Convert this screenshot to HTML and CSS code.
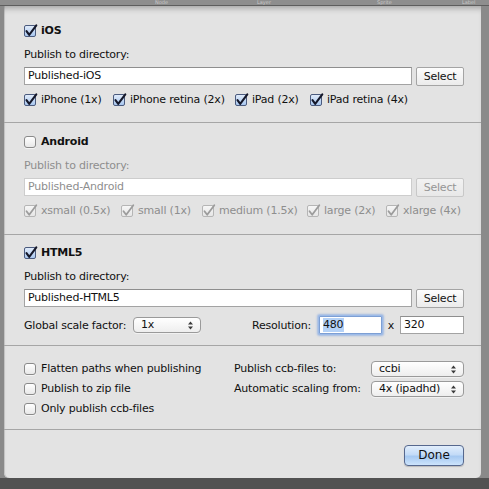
FILE: index.html
```html
<!DOCTYPE html>
<html>
<head>
<meta charset="utf-8">
<title>Publish Settings</title>
<link rel="stylesheet" href="styles.css">
</head>
<body>
<div class="titlebar"><span></span><span>Node</span><span>Layer</span><span>Sprite</span><span>Label</span></div>
<div class="stage">
  <div class="dialog">
    <section class="sec sec-ios">
      <div class="check"><span class="box on"><svg viewBox="0 0 14 14"><path d="M2.5 6.2 L5.2 9.8 L12.3 0.3"/></svg></span><b>iOS</b></div>
      <div class="lbl">Publish to directory:</div>
      <div class="dir-row"><div class="field">Published-iOS</div><div class="btn">Select</div></div>
      <div class="opts opts-ios">
        <div class="check"><span class="box on"><svg viewBox="0 0 14 14"><path d="M2.5 6.2 L5.2 9.8 L12.3 0.3"/></svg></span>iPhone (1x)</div>
        <div class="check"><span class="box on"><svg viewBox="0 0 14 14"><path d="M2.5 6.2 L5.2 9.8 L12.3 0.3"/></svg></span>iPhone retina (2x)</div>
        <div class="check"><span class="box on"><svg viewBox="0 0 14 14"><path d="M2.5 6.2 L5.2 9.8 L12.3 0.3"/></svg></span>iPad (2x)</div>
        <div class="check"><span class="box on"><svg viewBox="0 0 14 14"><path d="M2.5 6.2 L5.2 9.8 L12.3 0.3"/></svg></span>iPad retina (4x)</div>
      </div>
    </section>

    <section class="sec sec-android">
      <div class="check"><span class="box off"></span><b>Android</b></div>
      <div class="lbl dim">Publish to directory:</div>
      <div class="dir-row"><div class="field dis">Published-Android</div><div class="btn dis">Select</div></div>
      <div class="opts opts-and dim">
        <div class="check"><span class="box dis"><svg viewBox="0 0 14 14"><path d="M2.5 6.2 L5.2 9.8 L12.3 0.3"/></svg></span>xsmall (0.5x)</div>
        <div class="check"><span class="box dis"><svg viewBox="0 0 14 14"><path d="M2.5 6.2 L5.2 9.8 L12.3 0.3"/></svg></span>small (1x)</div>
        <div class="check"><span class="box dis"><svg viewBox="0 0 14 14"><path d="M2.5 6.2 L5.2 9.8 L12.3 0.3"/></svg></span>medium (1.5x)</div>
        <div class="check"><span class="box dis"><svg viewBox="0 0 14 14"><path d="M2.5 6.2 L5.2 9.8 L12.3 0.3"/></svg></span>large (2x)</div>
        <div class="check"><span class="box dis"><svg viewBox="0 0 14 14"><path d="M2.5 6.2 L5.2 9.8 L12.3 0.3"/></svg></span>xlarge (4x)</div>
      </div>
    </section>

    <section class="sec sec-html">
      <div class="check"><span class="box on"><svg viewBox="0 0 14 14"><path d="M2.5 6.2 L5.2 9.8 L12.3 0.3"/></svg></span><b>HTML5</b></div>
      <div class="lbl">Publish to directory:</div>
      <div class="dir-row"><div class="field">Published-HTML5</div><div class="btn">Select</div></div>
      <div class="scale">
        <span class="scale-lbl">Global scale factor:</span>
        <div class="popup w68"><span>1x</span><svg class="arr" viewBox="0 0 5 9"><path d="M0 3.6 L2.5 0.6 L5 3.6Z M0 5.4 L2.5 8.4 L5 5.4Z"/></svg></div>
        <span class="res-lbl">Resolution:</span>
        <div class="num focus"><span class="sel">480</span></div>
        <span class="times">x</span>
        <div class="num">320</div>
      </div>
    </section>

    <section class="sec sec-flags">
      <div class="flags">
        <div class="check"><span class="box off"></span>Flatten paths when publishing</div>
        <span class="flag-lbl">Publish ccb-files to:</span>
        <div class="popup"><span>ccbi</span><svg class="arr" viewBox="0 0 5 9"><path d="M0 3.6 L2.5 0.6 L5 3.6Z M0 5.4 L2.5 8.4 L5 5.4Z"/></svg></div>
        <div class="check"><span class="box off"></span>Publish to zip file</div>
        <span class="flag-lbl">Automatic scaling from:</span>
        <div class="popup"><span>4x (ipadhd)</span><svg class="arr" viewBox="0 0 5 9"><path d="M0 3.6 L2.5 0.6 L5 3.6Z M0 5.4 L2.5 8.4 L5 5.4Z"/></svg></div>
        <div class="check"><span class="box off"></span>Only publish ccb-files</div>
      </div>
    </section>

    <section class="sec sec-actions">
      <div class="done">Done</div>
    </section>
  </div>
</div>
</body>
</html>
```

FILE: styles.css
```css
* { box-sizing: border-box; }
html, body { margin: 0; padding: 0; }
body {
  width: 489px;
  height: 489px;
  overflow: hidden;
  background: #525252;
  font-family: "DejaVu Sans", "Lucida Grande", sans-serif;
  font-size: 11px;
  letter-spacing: -0.2px;
  color: #111;
}

.titlebar {
  height: 6px;
  background: #8e8e8e;
  border-bottom: 1px solid #5e5e5e;
  overflow: hidden;
  display: grid;
  grid-template-columns: 155px 102px 120px 85px auto;
  color: #c9c9c9;
  font-size: 5px;
  letter-spacing: 0;
  line-height: 5px;
}

.stage {
  height: 472px;
  background: #8a8a8a;
  padding-left: 4px;
}
.dialog {
  width: 477px;
  height: 472px;
  background: #e3e3e3;
  border-radius: 0 0 5px 5px;
  box-shadow: inset 0 6px 6px -4px rgba(0, 0, 0, 0.3), inset 1px 0 0 #c8c8c8;
}

.sec {
  padding: 0 17px 0 20px;
  border-bottom: 1px solid #a6a6a6;
}
.sec-ios { padding-top: 17px; padding-bottom: 14px; }
.sec-android { padding-top: 11px; padding-bottom: 15px; }
.sec-html { padding-top: 10px; padding-bottom: 11px; }
.sec-flags { padding-top: 15px; padding-bottom: 12px; }
.sec-actions {
  border-bottom: none;
  padding-top: 15px;
  display: flex;
  justify-content: flex-end;
}

.check {
  display: flex;
  align-items: center;
  height: 16px;
  line-height: 16px;
  white-space: nowrap;
}
.check b { font-weight: bold; }

.box {
  position: relative;
  flex: none;
  width: 12px;
  height: 12px;
  margin-right: 5px;
}
.box svg {
  position: absolute;
  left: -1px;
  top: -1px;
  width: 14px;
  height: 14px;
  overflow: visible;
}
.box svg path {
  fill: none;
  stroke: #15182a;
  stroke-width: 2.1;
  stroke-linecap: round;
  stroke-linejoin: round;
}
.box.on {
  border: 1px solid #4b5b7e;
  border-radius: 2px;
  background: linear-gradient(#e0ebfa, #a9c7ef);
}
.box.off {
  border: 1px solid #8a8a8a;
  border-radius: 3px;
  background: linear-gradient(#ffffff, #e8e8e8);
  box-shadow: 0 1px 0 rgba(255, 255, 255, 0.6);
}
.box.dis {
  border: 1px solid #b5b5b5;
  border-radius: 2px;
  background: linear-gradient(#f6f6f6, #e6e6e6);
}
.box.dis svg path { stroke: #9c9c9c; stroke-width: 1.8; }

.lbl {
  margin-top: 8px;
  height: 16px;
  line-height: 16px;
}
.dim { color: #8e8e8e; }

.dir-row {
  display: flex;
  margin-top: 4px;
  height: 18px;
}
.field {
  flex: 1;
  height: 18px;
  border: 1px solid #a3a3a3;
  border-top-color: #8e8e8e;
  background: #fff;
  padding: 0 3px;
  line-height: 16px;
}
.field.dis {
  border-color: #cdcdcd;
  color: #8e8e8e;
}
.btn {
  flex: none;
  width: 48px;
  height: 19px;
  margin-left: 4px;
  border: 1px solid #a4a4a4;
  border-radius: 2px;
  background: linear-gradient(#fdfdfd, #ebebeb);
  text-align: center;
  line-height: 17px;
}
.btn.dis {
  border-color: #c8c8c8;
  color: #969696;
  background: linear-gradient(#f2f2f2, #e8e8e8);
}

.opts {
  display: grid;
  margin-top: 7px;
}
.opts-ios { grid-template-columns: 89px 122px 75px auto; }
.opts-and { grid-template-columns: 97px 81px 105px 79px auto; }

.scale {
  display: flex;
  align-items: center;
  height: 18px;
  margin-top: 9px;
  white-space: nowrap;
}
.scale-lbl { width: 109px; flex: none; }
.res-lbl { margin-left: auto; margin-right: 8px; }

.popup {
  height: 16px;
  border: 1px solid #9a9a9a;
  border-radius: 4px;
  background: linear-gradient(#ffffff, #eeeeee);
  padding: 0 7px;
  display: flex;
  align-items: center;
  justify-content: space-between;
  line-height: 14px;
  box-shadow: 0 1px 0 rgba(255, 255, 255, 0.5);
}
.popup.w68 { width: 68px; flex: none; }
.arr {
  width: 5px;
  height: 9px;
  fill: #3b3b3b;
}

.num {
  flex: none;
  width: 64px;
  height: 18px;
  border: 1px solid #a3a3a3;
  border-top-color: #8e8e8e;
  background: #fff;
  padding: 0 3px;
  line-height: 16px;
}
.num.focus {
  width: 63px;
  border-color: #7d9fd4;
  box-shadow: 0 0 0 1px #9dbbe8, 0 0 2px 2px rgba(110, 155, 225, 0.55);
  border-radius: 1px;
}
.sel {
  display: inline-block;
  background: #b5d2f7;
  line-height: 14px;
  padding-right: 1px;
}
.times {
  width: 18px;
  text-align: center;
  flex: none;
}

.flags {
  display: grid;
  grid-template-columns: 210px 137px 1fr;
  grid-template-rows: repeat(3, 16px);
  row-gap: 4px;
  align-items: center;
}
.flag-lbl {
  line-height: 16px;
  white-space: nowrap;
}

.done {
  width: 60px;
  height: 21px;
  border: 1px solid #56688e;
  border-radius: 4px;
  background: linear-gradient(#e2eefc 0%, #c3dbf7 45%, #a6c9f1 55%, #cde4fc 100%);
  font-size: 12px;
  letter-spacing: 0;
  text-align: center;
  line-height: 19px;
  color: #111;
  box-shadow: 0 1px 1px rgba(0, 0, 0, 0.18);
}
```
